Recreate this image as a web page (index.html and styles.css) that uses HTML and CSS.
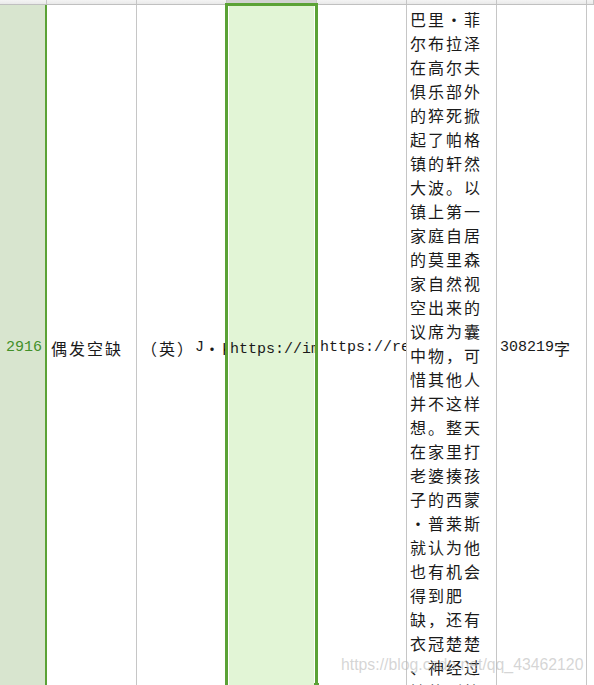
FILE: index.html
```html
<!DOCTYPE html>
<html lang="zh-CN">
<head>
<meta charset="utf-8">
<title>Sheet</title>
<link rel="stylesheet" href="styles.css">
</head>
<body>
<div class="sheet">
  <div class="colhead">
    <div class="ch ch-a"></div>
    <div class="ch ch-b"></div>
    <div class="ch ch-c"></div>
    <div class="ch ch-d"></div>
    <div class="ch ch-e"></div>
    <div class="ch ch-f"></div>
    <div class="ch ch-g"></div>
    <div class="ch ch-h"></div>
  </div>
  <div class="row">
    <div class="rh"><span class="lat">2916</span></div>
    <div class="cell c-b"><span class="cjk">偶发空缺</span></div>
    <div class="cell c-c"><span class="cjk">（英）</span><span class="lat">J</span><span class="cjk">・K・罗琳</span></div>
    <div class="cell c-d"><span class="lat">https://img.example/cover.jpg</span></div>
    <div class="cell c-e"><span class="lat">https://read.example/book/2916</span></div>
    <div class="cell c-f"><span class="cjk wrap">巴里・菲<br>尔布拉泽<br>在高尔夫<br>俱乐部外<br>的猝死掀<br>起了帕格<br>镇的轩然<br>大波。以<br>镇上第一<br>家庭自居<br>的莫里森<br>家自然视<br>空出来的<br>议席为囊<br>中物，可<br>惜其他人<br>并不这样<br>想。整天<br>在家里打<br>老婆揍孩<br>子的西蒙<br>・普莱斯<br>就认为他<br>也有机会<br>得到肥<br>缺，还有<br>衣冠楚楚<br>、神经过<br>敏的副校</span></div>
    <div class="cell c-g"><span class="lat">308219</span><span class="cjk">字</span></div>
    <div class="cell c-h"></div>
  </div>
  <div class="handle"></div>
  <div class="wm">https://blog.csdn.net/qq_43462120</div>
</div>
</body>
</html>
```

FILE: styles.css
```css
html, body {
  margin: 0;
  padding: 0;
  background: #ffffff;
  overflow: hidden;
}

.sheet {
  position: relative;
  width: 594px;
  height: 685px;
  overflow: hidden;
  font-family: "Noto Sans CJK SC", sans-serif;
  color: #1a1a1a;
}

.colhead {
  display: grid;
  grid-template-columns: 47px 90px 90px 90px 90px 90px 90px 1fr;
  height: 4px;
  border-bottom: 1px solid #c0c0c0;
  background: linear-gradient(#f4f4f4, #e9e9e9);
}

.ch {
  border-right: 1px solid #c6c6c6;
}

.ch-d {
  background: #d2d2d2;
}

.row {
  display: grid;
  grid-template-columns: 47px 90px 88px 93px 89px 90px 90px 1fr;
  height: 686px;
}

.rh {
  background: #d8e5cf;
  border-right: 2px solid #5ba236;
  color: #43902a;
  display: flex;
  align-items: center;
  justify-content: flex-end;
  padding-right: 3px;
}

.cell {
  display: flex;
  align-items: center;
  overflow: hidden;
  white-space: nowrap;
  border-right: 1px solid #c6c6c6;
}

.lat {
  font-family: "Liberation Mono", monospace;
  font-size: 15px;
  line-height: 24px;
}

.cjk {
  font-family: "Noto Sans CJK SC", sans-serif;
  font-size: 16px;
  letter-spacing: 2px;
  line-height: 24px;
}

.c-b {
  padding-left: 4px;
}

.c-c {
  padding-left: 4px;
  border-right: none;
}

.c-d {
  background: #e2f5d6;
  border: 3px solid #5ba236;
  border-bottom: none;
  box-shadow: inset 1px 0 0 #ffffff, inset -1px 0 0 #ffffff;
  margin-top: -2px;
  padding-left: 2px;
  padding-top: 2px;
}

.c-e {
  padding-left: 2px;
}

.c-f {
  align-items: flex-start;
  padding-left: 3px;
  padding-top: 2px;
}

.wrap {
  display: block;
}

.c-g {
  padding-left: 3px;
}

.c-h {
  border-right: none;
}

.handle {
  position: absolute;
  left: 314px;
  top: 683px;
  width: 5px;
  height: 5px;
  background: #5ba236;
}

.wm {
  position: absolute;
  left: 341px;
  top: 656px;
  font-family: "Liberation Sans", sans-serif;
  font-size: 15.8px;
  color: rgba(185, 185, 185, 0.6);
  white-space: nowrap;
}
```
